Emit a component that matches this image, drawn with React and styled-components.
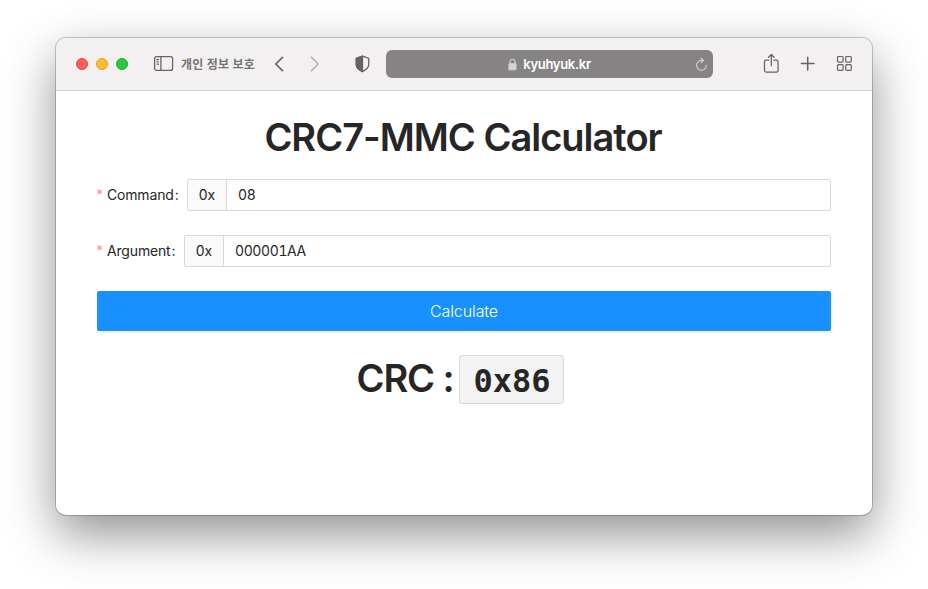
import React from 'react';
import styled, { createGlobalStyle } from 'styled-components';

const GlobalStyle = createGlobalStyle`
  * { box-sizing: border-box; }
  body {
    margin: 0;
    background: #fff;
    color: #262626;
    font-family: Inter, "Noto Sans CJK KR", sans-serif;
  }
`;

const Desktop = styled.div`
  height: 589px;
  padding: 38px 56px 0;
  overflow: hidden;
`;

const Window = styled.div`
  width: 816px;
  height: 477px;
  border-radius: 10px;
  overflow: hidden;
  background: #fff;
  box-shadow: 0 0 0 1px rgba(0, 0, 0, 0.2), 0 19px 50px rgba(0, 0, 0, 0.44);
`;

const Toolbar = styled.header`
  display: flex;
  align-items: center;
  height: 53px;
  padding: 0 19px 0 20px;
  background: #f2f0f1;
  border-bottom: 1px solid #d4d2d3;
  color: #656364;
`;

const Lights = styled.div`
  display: flex;
  gap: 8px;
  margin-right: 25px;
`;

const Light = styled.span`
  width: 12px;
  height: 12px;
  border-radius: 50%;
  background: ${(p) => p.$fill};
  border: 1px solid ${(p) => p.$edge};
`;

const Icon = styled.svg`
  display: block;
  flex: none;
  width: ${(p) => p.$w}px;
  height: ${(p) => p.$h}px;
  margin-left: ${(p) => p.$gap || 0}px;
  margin-bottom: ${(p) => p.$lift || 0}px;
  fill: none;
  stroke: currentColor;
  stroke-width: ${(p) => p.$stroke || 1.3};
  stroke-linecap: round;
  stroke-linejoin: round;
  opacity: ${(p) => p.$opacity || 1};
`;

const Privacy = styled.span`
  flex: none;
  width: 75px;
  margin-left: 7px;
  color: #747273;
  font: 700 12px/16px "Noto Sans CJK KR", sans-serif;
  letter-spacing: 0.3px;
  white-space: nowrap;
`;

const AddressBar = styled.div`
  display: grid;
  flex: none;
  grid-template-columns: 1fr auto 1fr;
  align-items: center;
  width: 327px;
  height: 28px;
  margin: 0 50px 0 16px;
  padding: 0 5px;
  border-radius: 6px;
  background: #868384;
  color: #d4d2d3;
`;

const Host = styled.div`
  display: flex;
  grid-column: 2;
  align-items: center;
  gap: 6px;
  color: #fff;
  font-size: 13px;
  font-weight: 600;
  letter-spacing: -0.3px;
`;

const Reload = styled.div`
  display: flex;
  justify-content: flex-end;
`;

const Page = styled.main`
  padding: 24px 41px 0;
`;

const Title = styled.h1`
  margin: 0 2px 20px 0;
  font-size: 38px;
  font-weight: 600;
  line-height: 44px;
  letter-spacing: -1px;
  text-align: center;
`;

const Field = styled.div`
  display: flex;
  align-items: center;
  height: 32px;
  margin-bottom: 24px;
  font-size: 14px;
`;

const Label = styled.label`
  display: flex;
  flex: none;
  width: ${(p) => p.$width}px;
  padding-bottom: 2px;
  letter-spacing: -0.17px;
`;

const Required = styled.span`
  width: 10px;
  margin-left: -1px;
  margin-right: 1px;
  color: #ff8587;
  font-size: 14px;
  line-height: 17px;
  font-weight: 300;
`;

const Colon = styled.span`
  margin-left: 1px;
`;

const InputGroup = styled.div`
  display: flex;
  flex: 1;
  height: 32px;
  border: 1px solid #d9d9d9;
  border-radius: 2px;
`;

const Prefix = styled.span`
  display: flex;
  align-items: center;
  justify-content: center;
  width: 39px;
  padding-bottom: 2px;
  background: #fafafa;
  border-right: 1px solid #d9d9d9;
`;

const Input = styled.input`
  flex: 1;
  min-width: 0;
  padding: 0 11px 1px;
  border: 0;
  outline: 0;
  background: transparent;
  color: #262626;
  font: 400 14px Inter, sans-serif;
  font-variant-numeric: tabular-nums;
  letter-spacing: -0.4px;
`;

const Button = styled.button`
  display: block;
  width: 100%;
  height: 40px;
  margin-bottom: 24px;
  padding: 0;
  border: 0;
  border-radius: 2px;
  background: #1890ff;
  box-shadow: 0 2px 0 rgba(0, 0, 0, 0.045);
  color: #fff;
  font: 300 16px/40px Inter, sans-serif;
  letter-spacing: -0.1px;
`;

const Result = styled.h1`
  display: flex;
  justify-content: center;
  margin: 0;
  font-size: 38px;
  font-weight: 600;
  line-height: 46px;
  letter-spacing: -1.1px;
`;

const Code = styled.code`
  width: 105px;
  height: 49px;
  margin: 0 7px 0 6px;
  border: 1px solid #d9d9d9;
  border-radius: 3px;
  background: #f3f3f3;
  font: 700 32px/50px "DejaVu Sans Mono", monospace;
  letter-spacing: 0;
  text-align: center;
`;

function FormField({ label, value, labelWidth }) {
  return (
    <Field>
      <Label $width={labelWidth}>
        <Required>*</Required>
        {label}
        <Colon>:</Colon>
      </Label>
      <InputGroup>
        <Prefix>0x</Prefix>
        <Input aria-label={label} defaultValue={value} />
      </InputGroup>
    </Field>
  );
}

export default function App() {
  return (
    <Desktop>
      <GlobalStyle />
      <Window>
        <Toolbar>
          <Lights>
            <Light $fill="#ff5f57" $edge="#e2483f" />
            <Light $fill="#febc2e" $edge="#e0a028" />
            <Light $fill="#28c840" $edge="#1fae2f" />
          </Lights>
          <Icon $w={21} $h={17} $lift={2} viewBox="0 0 21 17">
            <rect x="1.6" y="1.6" width="18" height="13.8" rx="2" />
            <path d="M7.9 1.6v13.8M4 4.5h1.5M4 6.8h1.5M4 9.1h1.5" />
          </Icon>
          <Privacy>개인 정보 보호</Privacy>
          <Icon $w={10} $h={16} $gap={18} $stroke={1.7} viewBox="0 0 10 16">
            <path d="M8.5 1.4 1.8 8l6.7 6.6" />
          </Icon>
          <Icon $w={10} $h={16} $gap={26} $stroke={1.6} $opacity={0.45} viewBox="0 0 10 16">
            <path d="m1.5 1.4 6.7 6.6-6.7 6.6" />
          </Icon>
          <Icon $w={15} $h={18} $gap={35} viewBox="0 0 15 18">
            <path d="M7.5 1.2 1.3 3.3v6.8c0 3 3.2 5 6.2 6.5 3-1.5 6.2-3.5 6.2-6.5V3.3z" />
            <path d="M7.5 1.2 1.3 3.3v6.8c0 3 3.2 5 6.2 6.5z" fill="currentColor" />
          </Icon>
          <AddressBar>
            <Host>
              <Icon $w={9} $h={13} viewBox="0 0 9 13" $stroke={1.1} color="#d4d2d3">
                <rect x="1" y="5.7" width="7" height="6" rx=".6" fill="currentColor" />
                <path d="M2 5.5V3.8a2.5 2.5 0 0 1 5 0v1.7" />
              </Icon>
              kyuhyuk.kr
            </Host>
            <Reload>
              <Icon $w={13} $h={15} $stroke={1.1} viewBox="0 0 13 15">
                <path d="M6.5 3.4a4.9 4.9 0 1 0 4.9 4.9M6.1 1.1l2.4 2.3-2.4 2.3M8.2 3.4H6.3" />
              </Icon>
            </Reload>
          </AddressBar>
          <Icon $w={17} $h={21} $lift={2} $stroke={1.25} viewBox="0 0 17 21">
            <path d="M5.7 7.2H3a1.5 1.5 0 0 0-1.5 1.5v8.8A1.5 1.5 0 0 0 3 19h10.6a1.5 1.5 0 0 0 1.5-1.5V8.7a1.5 1.5 0 0 0-1.5-1.5h-2.7M8.3 12.8V1.6M5.5 4.3l2.8-2.8 2.8 2.8" />
          </Icon>
          <Icon $w={15} $h={15} $gap={20} $lift={2} $stroke={1.5} viewBox="0 0 15 15">
            <path d="M7.7 1.3v12.6M1.4 7.6h12.6" />
          </Icon>
          <Icon $w={17} $h={17} $gap={21} $lift={2} $stroke={1.2} viewBox="0 0 17 17">
            <rect x="1.5" y="1.5" width="5.6" height="5.6" rx="1" />
            <rect x="9.7" y="1.5" width="5.6" height="5.6" rx="1" />
            <rect x="1.5" y="9.7" width="5.6" height="5.6" rx="1" />
            <rect x="9.7" y="9.7" width="5.6" height="5.6" rx="1" />
          </Icon>
        </Toolbar>
        <Page>
          <Title>CRC7-MMC Calculator</Title>
          <FormField label="Command" value="08" labelWidth={90} />
          <FormField label="Argument" value="000001AA" labelWidth={87} />
          <Button>Calculate</Button>
          <Result>
            CRC :<Code>0x86</Code>
          </Result>
        </Page>
      </Window>
    </Desktop>
  );
}
